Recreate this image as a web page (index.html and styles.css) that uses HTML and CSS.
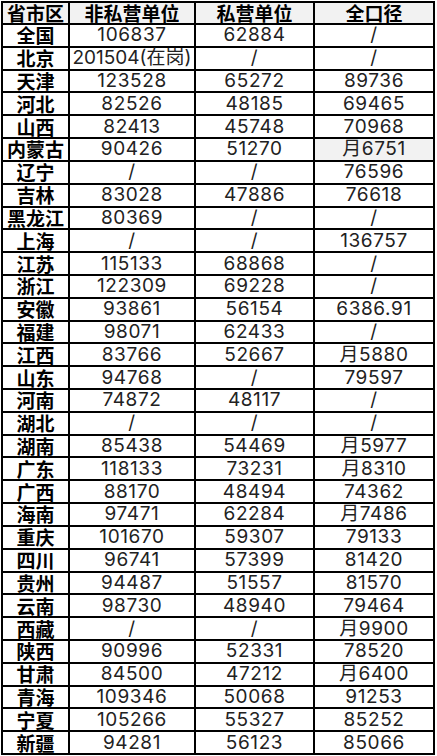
FILE: index.html
```html
<!DOCTYPE html>
<html lang="zh">
<head>
<meta charset="utf-8">
<link rel="stylesheet" href="styles.css">
</head>
<body>
<table class="wage">
<colgroup><col class="c1"><col class="c2"><col class="c3"><col class="c4"></colgroup>
<thead>
<tr><th>省市区</th><th>非私营单位</th><th>私营单位</th><th>全口径</th></tr>
</thead>
<tbody>
<tr><th>全国</th><td>106837</td><td>62884</td><td>/</td></tr>
<tr><th>北京</th><td class="tight">201504(在岗)</td><td>/</td><td>/</td></tr>
<tr><th>天津</th><td>123528</td><td>65272</td><td>89736</td></tr>
<tr><th>河北</th><td>82526</td><td>48185</td><td>69465</td></tr>
<tr><th>山西</th><td>82413</td><td>45748</td><td>70968</td></tr>
<tr><th>内蒙古</th><td>90426</td><td>51270</td><td class="hl">月6751</td></tr>
<tr><th>辽宁</th><td>/</td><td>/</td><td>76596</td></tr>
<tr><th>吉林</th><td>83028</td><td>47886</td><td>76618</td></tr>
<tr><th>黑龙江</th><td>80369</td><td>/</td><td>/</td></tr>
<tr><th>上海</th><td>/</td><td>/</td><td>136757</td></tr>
<tr><th>江苏</th><td>115133</td><td>68868</td><td>/</td></tr>
<tr><th>浙江</th><td>122309</td><td>69228</td><td>/</td></tr>
<tr><th>安徽</th><td>93861</td><td>56154</td><td>6386.91</td></tr>
<tr><th>福建</th><td>98071</td><td>62433</td><td>/</td></tr>
<tr><th>江西</th><td>83766</td><td>52667</td><td>月5880</td></tr>
<tr><th>山东</th><td>94768</td><td>/</td><td>79597</td></tr>
<tr><th>河南</th><td>74872</td><td>48117</td><td>/</td></tr>
<tr><th>湖北</th><td>/</td><td>/</td><td>/</td></tr>
<tr><th>湖南</th><td>85438</td><td>54469</td><td>月5977</td></tr>
<tr><th>广东</th><td>118133</td><td>73231</td><td>月8310</td></tr>
<tr><th>广西</th><td>88170</td><td>48494</td><td>74362</td></tr>
<tr><th>海南</th><td>97471</td><td>62284</td><td>月7486</td></tr>
<tr><th>重庆</th><td>101670</td><td>59307</td><td>79133</td></tr>
<tr><th>四川</th><td>96741</td><td>57399</td><td>81420</td></tr>
<tr><th>贵州</th><td>94487</td><td>51557</td><td>81570</td></tr>
<tr><th>云南</th><td>98730</td><td>48940</td><td>79464</td></tr>
<tr><th>西藏</th><td>/</td><td>/</td><td>月9900</td></tr>
<tr><th>陕西</th><td>90996</td><td>52331</td><td>78520</td></tr>
<tr><th>甘肃</th><td>84500</td><td>47212</td><td>月6400</td></tr>
<tr><th>青海</th><td>109346</td><td>50068</td><td>91253</td></tr>
<tr><th>宁夏</th><td>105266</td><td>55327</td><td>85252</td></tr>
<tr><th>新疆</th><td>94281</td><td>56123</td><td>85066</td></tr>
</tbody>
</table>
</body>
</html>
```
FILE: styles.css
```css
html, body {
  margin: 0;
  padding: 0;
  background: #ffffff;
}
.wage {
  margin: 1px 0 0 1px;
  width: 432px;
  height: 754px;
  border-collapse: collapse;
  table-layout: fixed;
  border: 2px solid #000;
}
.c1 { width: 67px; }
.c2 { width: 126px; }
.c3 { width: 119px; }
.c4 { width: 120px; }
.wage th, .wage td {
  border: 2px solid #000;
  padding: 0;
  text-align: center;
  vertical-align: middle;
  white-space: nowrap;
  line-height: 20px;
}
.wage th {
  font-family: "Noto Sans CJK SC", sans-serif;
  font-weight: 700;
  font-size: 19px;
  color: #000;
}
.wage thead th {
  background: #f2f2f2;
}
.wage td {
  font-family: Inter, "Noto Sans CJK SC", sans-serif;
  font-size: 19px;
  font-weight: 400;
  letter-spacing: 0.6px;
  color: #222222;
}
.wage td.tight {
  letter-spacing: 0;
}
.wage td.hl {
  background: #f2f2f2;
}
```
